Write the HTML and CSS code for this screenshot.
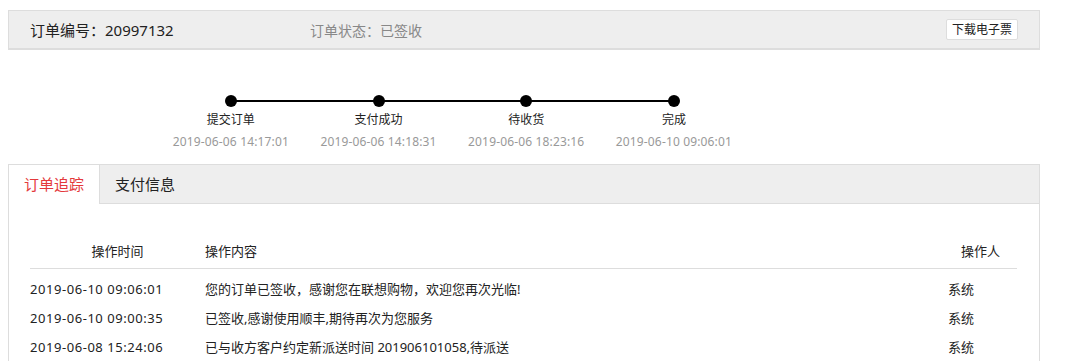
FILE: index.html
```html
<!DOCTYPE html>
<html>
<head>
	<meta charset="utf-8">
	<title>订单详情</title>
	<link rel="stylesheet" href="styles.css">
</head>
<body>
	<div id="pedido">
		<div class="cabecalho">
			<span class="numero">订单编号：20997132</span>
			<span class="estado">订单状态：已签收</span>
			<button class="baixar">下载电子票</button>
		</div>

		<div class="linha-tempo">
			<div class="passo">
				<span class="ponto"></span>
				<span class="nome">提交订单</span>
				<span class="data">2019-06-06 14:17:01</span>
			</div>
			<div class="passo">
				<span class="ponto"></span>
				<span class="nome">支付成功</span>
				<span class="data">2019-06-06 14:18:31</span>
			</div>
			<div class="passo">
				<span class="ponto"></span>
				<span class="nome">待收货</span>
				<span class="data">2019-06-06 18:23:16</span>
			</div>
			<div class="passo">
				<span class="ponto"></span>
				<span class="nome">完成</span>
				<span class="data">2019-06-10 09:06:01</span>
			</div>
		</div>

		<div class="abas">
			<div class="abas-topo">
				<span class="aba ativa">订单追踪</span>
				<span class="aba">支付信息</span>
			</div>
			<div class="abas-corpo">
				<div class="tabela">
					<div class="cab col-tempo">操作时间</div>
					<div class="cab col-conteudo">操作内容</div>
					<div class="cab col-pessoa">操作人</div>

					<div class="cel hora">2019-06-10 09:06:01</div>
					<div class="cel">您的订单已签收，感谢您在联想购物，欢迎您再次光临!</div>
					<div class="cel">系统</div>

					<div class="cel hora">2019-06-10 09:00:35</div>
					<div class="cel">已签收,感谢使用顺丰,期待再次为您服务</div>
					<div class="cel">系统</div>

					<div class="cel hora">2019-06-08 15:24:06</div>
					<div class="cel">已与收方客户约定新派送时间 201906101058,待派送</div>
					<div class="cel">系统</div>
				</div>
			</div>
		</div>
	</div>
</body>
</html>
```

FILE: styles.css
```css
	body{
		margin: 8px;
		font-family: "Noto Sans", "Noto Sans CJK SC", sans-serif;
		color: #222;
	}
	#pedido{
		width: 1032px;
	}
	.cabecalho{
		display: flex;
		align-items: center;
		margin-top: 2px;
		height: 37px;
		padding: 0 21px;
		background-color: #eee;
		border: 1px solid #ddd;
		border-bottom-width: 2px;
	}
	.numero{
		width: 280px;
		font-size: 15px;
		color: #222;
	}
	.estado{
		font-size: 14px;
		color: #888;
	}
	.baixar{
		margin-left: auto;
		height: 21px;
		padding: 0 5px;
		background-color: #fff;
		border: 1px solid #ddd;
		border-radius: 2px;
		font-family: inherit;
		font-size: 12px;
		line-height: 19px;
		color: #222;
	}
	.linha-tempo{
		display: flex;
		margin: 45px 0 0 149px;
		height: 69px;
	}
	.passo{
		position: relative;
		display: flex;
		flex-direction: column;
		align-items: center;
		width: 147.7px;
	}
	.passo + .passo::before{
		content: "";
		position: absolute;
		top: 5px;
		left: -50%;
		width: 100%;
		height: 2px;
		background-color: #000;
	}
	.ponto{
		position: relative;
		z-index: 1;
		width: 12px;
		height: 12px;
		border-radius: 50%;
		background-color: #000;
	}
	.nome{
		margin-top: 5px;
		font-size: 12px;
		line-height: 16px;
		color: #222;
	}
	.data{
		margin-top: 6px;
		font-size: 12px;
		line-height: 16px;
		color: #999;
		letter-spacing: 0.15px;
	}
	.abas{
		border: 1px solid #ddd;
		border-bottom: none;
	}
	.abas-topo{
		display: flex;
		height: 38px;
		background-color: #eee;
		border-bottom: 1px solid #ddd;
	}
	.aba{
		padding: 0 15px;
		font-size: 15px;
		line-height: 38px;
		color: #222;
	}
	.aba.ativa{
		background-color: #fff;
		color: #e4393c;
		border-right: 1px solid #ddd;
		height: 39px;
	}
	.abas-corpo{
		padding: 32px 22px 20px 21px;
	}
	.tabela{
		display: grid;
		grid-template-columns: 175px 1fr 69px;
		font-size: 13px;
	}
	.cab{
		line-height: 30px;
		padding-bottom: 2px;
		border-bottom: 1px solid #ddd;
		margin-bottom: 6px;
	}
	.col-tempo{
		text-align: center;
	}
	.col-pessoa{
		text-align: right;
		padding-right: 17px;
	}
	.cel{
		line-height: 29px;
		white-space: nowrap;
	}
	.hora{
		letter-spacing: 0.55px;
	}
```
